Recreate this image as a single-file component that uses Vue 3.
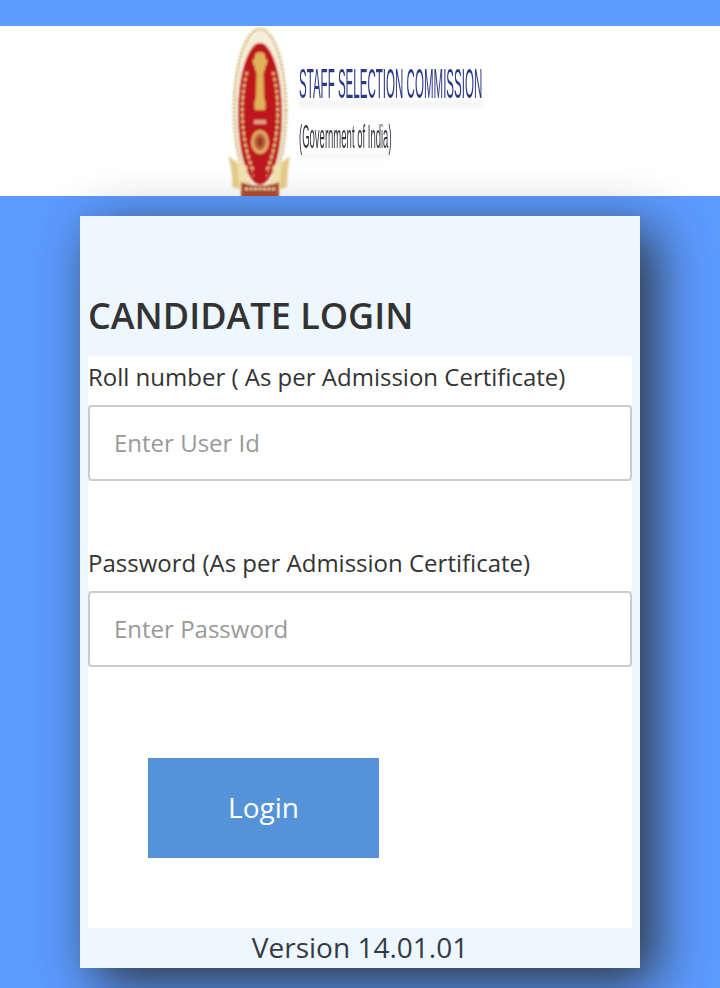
<script setup>
import { ref } from 'vue';

const rollNumber = ref('');
const password = ref('');
</script>

<template>
  <div class="page">
    <header class="header">
      <svg class="logo" width="264" height="170" viewBox="0 0 264 170" role="img" aria-label="Staff Selection Commission logo">
        <defs>
          <filter id="soft" x="-10%" y="-10%" width="120%" height="120%"><feGaussianBlur stdDeviation="1" /></filter>
          <filter id="softer"><feGaussianBlur stdDeviation="0.4" /></filter>
          <filter id="haze" x="-10%" y="-100%" width="120%" height="300%"><feGaussianBlur stdDeviation="1.5" /></filter>
        </defs>
        <g filter="url(#soft)">
          <!-- outer rays and ring -->
          <ellipse cx="32" cy="84" rx="27" ry="82" fill="#f6eed8" />
          <ellipse cx="32" cy="84" rx="26" ry="81" fill="none" stroke="#c9ae62" stroke-width="3" stroke-dasharray="2 2" />
          <!-- red shield -->
          <ellipse cx="32" cy="88" rx="22" ry="71" fill="#bd151b" />
          <!-- national emblem -->
          <path d="M32 26 C28 26 26 29 27 32 C24 33 24 37 26 39 L27 43 L28.5 47 L28 72 C26 76 26 80 27 84 L37 84 C38 80 38 76 36 72 L35.5 47 L37 43 L38 39 C40 37 40 33 37 32 C38 29 36 26 32 26 Z" fill="#e2b25a" />
          <path d="M26 94 H38 V98 H26 Z" fill="#f2e0b0" opacity="0.7" />
          <!-- wreath -->
          <path d="M19 46 C11 76 13 118 26 146" fill="none" stroke="#e6bf7c" stroke-width="2.6" stroke-dasharray="3.5 2.5" />
          <path d="M45 46 C53 76 51 118 38 146" fill="none" stroke="#e6bf7c" stroke-width="2.6" stroke-dasharray="3.5 2.5" />
          <path d="M16 60 C12 88 16 124 26 152" fill="none" stroke="#efd6a0" stroke-width="1.2" stroke-dasharray="1.5 3" />
          <path d="M48 60 C52 88 48 124 38 152" fill="none" stroke="#efd6a0" stroke-width="1.2" stroke-dasharray="1.5 3" />
          <!-- lower medallion -->
          <ellipse cx="32" cy="116" rx="9" ry="12" fill="#e0ad68" />
          <ellipse cx="32" cy="116" rx="6" ry="8.5" fill="#c4603a" />
          <ellipse cx="32" cy="116" rx="2.6" ry="4.5" fill="#8c3a24" />
          <!-- ribbon wings -->
          <path d="M0 130 L11 138 L14 164 L4 161 C5 150 3 140 0 130 Z" fill="#e3c987" />
          <path d="M62 130 L52 138 L50 164 L59 161 C59 150 60 140 62 130 Z" fill="#e3c987" />
          <path d="M9 136 L19 140 L20 168 L12 164 Z" fill="#f1dfae" />
          <path d="M54 136 L45 140 L44 168 L51 164 Z" fill="#f1dfae" />
          <!-- motto scroll -->
          <path d="M13 156 C24 161 40 161 51 156 L51 172 L13 172 Z" fill="#a84a2a" />
          <path d="M17 163 H47" stroke="#f2deb0" stroke-width="1.8" stroke-dasharray="3 1.5" />
        </g>
        <rect x="70" y="74" width="185" height="8" fill="#c4c7da" opacity="0.14" filter="url(#haze)" />
        <rect x="70" y="126" width="90" height="7" fill="#c8c8c8" opacity="0.1" filter="url(#haze)" />
        <text class="logo-title" transform="translate(71 72) scale(0.275 1)" filter="url(#softer)">STAFF SELECTION COMMISSION</text>
        <text class="logo-sub" transform="translate(71 122) scale(0.28 1)" filter="url(#softer)">(Government of India)</text>
      </svg>
    </header>

    <main class="card">
      <h1 class="title">CANDIDATE LOGIN</h1>
      <form class="form" @submit.prevent>
        <label class="label" for="roll">Roll number ( As per Admission Certificate)</label>
        <input id="roll" v-model="rollNumber" class="input" type="text" placeholder="Enter User Id" />
        <label class="label label-second" for="pass">Password (As per Admission Certificate)</label>
        <input id="pass" v-model="password" class="input" type="password" placeholder="Enter Password" />
        <button class="login" type="submit">Login</button>
      </form>
      <p class="version">Version 14.01.01</p>
    </main>
  </div>
</template>

<style>
html,
body {
  margin: 0;
  background: #5c9bff;
}
</style>

<style scoped>
.page {
  height: 988px;
  overflow: hidden;
  padding-top: 26px;
  box-sizing: border-box;
  background: #5c9bff;
  font-family: "Open Sans", "Noto Sans", sans-serif;
  color: #333;
}
.header {
  height: 170px;
  background: #fff;
  display: flex;
  justify-content: center;
}
.logo {
  display: block;
}
.logo-title {
  font-family: "Liberation Sans", sans-serif;
  font-size: 42px;
  fill: #2c3a86;
}
.logo-sub {
  font-family: "Liberation Sans", sans-serif;
  font-size: 34px;
  fill: #33363f;
}
.card {
  width: 560px;
  height: 752px;
  margin: 20px auto 0;
  padding: 0 8px;
  box-sizing: border-box;
  background: #eef7ff;
  box-shadow: 15px 15px 50px rgba(40, 40, 40, 0.9);
}
.title {
  height: 140px;
  margin: 0;
  padding-top: 76px;
  box-sizing: border-box;
  font-size: 36px;
  line-height: 48px;
  font-weight: 600;
  color: #333;
}
.form {
  height: 572px;
  background: #fff;
  display: flex;
  flex-direction: column;
  align-items: flex-start;
}
.label {
  font-size: 24px;
  line-height: 41px;
  height: 49px;
  color: #333;
}
.label-second {
  margin-top: 61px;
}
.input {
  width: 100%;
  height: 76px;
  padding: 0 24px 2px;
  box-sizing: border-box;
  border: 2px solid #ccc;
  border-radius: 4px;
  background: #fff;
  outline: none;
  font-family: inherit;
  font-size: 24px;
  color: #333;
}
.input::placeholder {
  color: #999;
  opacity: 1;
}
.login {
  width: 231px;
  height: 100px;
  margin: 91px 0 0 60px;
  padding: 0 0 2px;
  border: 0;
  background: #5593d9;
  color: #fff;
  font-family: inherit;
  font-size: 28px;
}
.version {
  margin: 0;
  height: 40px;
  text-align: center;
  font-size: 28px;
  line-height: 38px;
  color: #333a44;
}
</style>
